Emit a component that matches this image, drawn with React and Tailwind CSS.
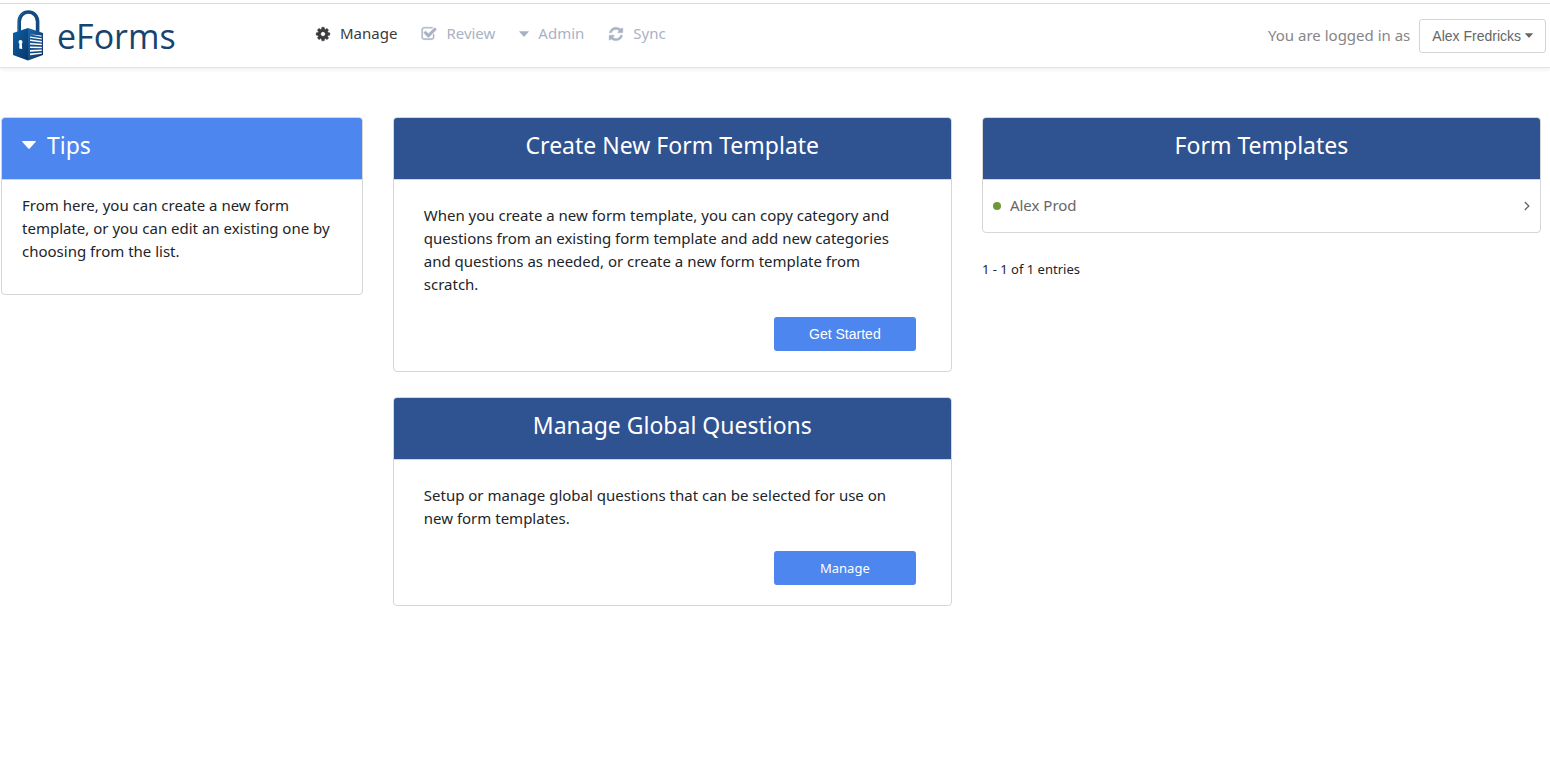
import { useState } from 'react';

const ICONS = {
  cog: 'M1152 896q0-106-75-181t-181-75-181 75-75 181 75 181 181 75 181-75 75-181zm512-109v222q0 12-8 23t-20 13l-185 28q-19 54-39 91 35 50 107 138 10 12 10 25t-9 23q-27 37-99 108t-94 71q-12 0-26-9l-138-108q-44 23-91 38-16 136-29 186-7 28-36 28h-222q-14 0-24.5-8.5t-11.5-21.5l-28-184q-49-16-90-37l-141 107q-10 9-25 9-14 0-25-11-126-114-165-168-7-10-7-23 0-12 8-23 15-21 51-66.5t54-70.5q-27-50-41-99l-183-27q-13-2-21-12.5t-8-23.5v-222q0-12 8-23t19-13l186-28q14-46 39-92-40-57-107-138-10-12-10-24 0-10 9-23 26-36 98.5-107.5t94.5-71.5q13 0 26 10l138 107q44-23 91-38 16-136 29-186 7-28 36-28h222q14 0 24.5 8.5t11.5 21.5l28 184q49 16 90 37l142-107q9-9 24-9 13 0 25 10 129 119 165 170 7 8 7 22 0 12-8 23-15 21-51 66.5t-54 70.5q26 50 41 98l183 28q13 2 21 12.5t8 23.5z',
  check: 'M1472 930v318q0 119-84.5 203.5t-203.5 84.5h-832q-119 0-203.5-84.5t-84.5-203.5v-832q0-119 84.5-203.5t203.5-84.5h832q63 0 117 25 15 7 18 23 3 17-9 29l-49 49q-10 10-23 10-3 0-9-2-23-6-45-6h-832q-66 0-113 47t-47 113v832q0 66 47 113t113 47h832q66 0 113-47t47-113v-254q0-13 9-22l64-64q10-10 23-10 6 0 12 3 20 8 20 29zm231-489l-814 814q-24 24-57 24t-57-24l-430-430q-24-24-24-57t24-57l110-110q24-24 57-24t57 24l263 263 647-647q24-24 57-24t57 24l110 110q24 24 24 57t-24 57z',
  sync: 'M1639 1056q0 5-1 7-64 268-268 434.5t-478 166.5q-146 0-282.5-55t-243.5-157l-129 129q-19 19-45 19t-45-19-19-45v-448q0-26 19-45t45-19h448q26 0 45 19t19 45-19 45l-137 137q71 66 161 102t187 36q134 0 250-65t186-179q11-17 53-117 8-23 30-23h192q13 0 22.5 9.5t9.5 22.5zm25-800v448q0 26-19 45t-45 19h-448q-26 0-45-19t-19-45 19-45l138-138q-148-137-349-137-134 0-250 65t-186 179q-11 17-53 117-8 23-30 23h-199q-13 0-22.5-9.5t-9.5-22.5v-7q65-268 270-434.5t480-166.5q146 0 284 55.5t245 156.5l130-129q19-19 45-19t45 19 19 45z',
};

const NAV = [
  { label: 'Manage', icon: 'cog', active: true },
  { label: 'Review', icon: 'check' },
  { label: 'Admin', icon: 'caret' },
  { label: 'Sync', icon: 'sync' },
];

function Caret({ className }) {
  return <svg viewBox="0 0 14 8" className={className} fill="currentColor" aria-hidden="true"><path d="M.7 0h12.6q.9.3.3 1L7.7 7.6q-.7.6-1.4 0L.4 1Q-.2.3.7 0z"/></svg>;
}

function NavIcon({ name }) {
  if (name === 'caret') return <Caret className="w-[10px] h-[6px]"/>;
  return <svg viewBox="0 0 1792 1792" className="size-4" fill="currentColor" stroke="currentColor" strokeWidth="40" aria-hidden="true"><path d={ICONS[name]}/></svg>;
}

function LockLogo() {
  return (
    <svg viewBox="0 0 32 52" className="w-8 h-[52px]" aria-hidden="true">
      <defs>
        <linearGradient id="face" x1="0" y1="0" x2="1" y2="1"><stop offset="0" stopColor="#0b63ac"/><stop offset="1" stopColor="#0a3566"/></linearGradient>
        <linearGradient id="side" x1="0" y1="0" x2="1" y2="1"><stop offset="0" stopColor="#1a68ab"/><stop offset="1" stopColor="#0d2f60"/></linearGradient>
      </defs>
      <path d="M7.2 24V11.5a9.2 9.5 0 0 1 18.4 0V24" fill="none" stroke="#134a80" strokeWidth="3.6"/>
      <path d="M6.6 22V11.5a9.8 10 0 0 1 5-8.6" fill="none" stroke="#2b6ca6" strokeWidth=".8"/>
      <path d="M1 23 16 18v32.4L1 45z" fill="url(#face)"/>
      <path d="M16 18l15 5v22L16 50.4z" fill="url(#side)"/>
      <g fill="#fff">
        <path d="M17.5 24.2l12 1.4v1.2z"/>
        <path d="M18 26.4l11.8 1.8v1.4L18 27.8zM18 29.6l11.8 1.4v1.4L18 31.1zM18 33l11.8.8v1.5L18 34.6zM18 36.5l11.8.2v1.5L18 38.1zM18 40.1l11.8-.5v1.5L18 41.7zM18 43.6l11.8-1.2v1.3L18 45.2z"/>
      </g>
      <circle cx="8.5" cy="32" r="2" fill="#fff"/>
      <path d="M7.5 32h2.2l.5 7-3-.6z" fill="#fff"/>
    </svg>
  );
}

function Card({ title, children }) {
  return (
    <section className="border border-[#d5d6d8] rounded overflow-hidden">
      <h2 className="h-[62px] pt-[11px] border-b border-[#d5d6d8] bg-[#2f5291] text-white text-[23px] leading-8 text-center font-normal">{title}</h2>
      {children}
    </section>
  );
}

function ActionBtn({ children, className }) {
  return <button type="button" className={`w-[142px] h-[34px] rounded-[3px] bg-[#4c86ee] text-white ${className}`}>{children}</button>;
}

export default function App() {
  const [tipsOpen, setTipsOpen] = useState(true);

  return (
    <div className="min-h-screen bg-white pt-[3px] font-['Noto_Sans','Open_Sans',sans-serif] text-[15px] leading-[23px] text-[#212529]">
      <header className="flex items-center h-[65px] border-t border-t-[#dcdcdc] border-b border-b-[#e3e3e3] shadow-[0_2px_4px_rgba(0,0,0,0.06)] pl-3 pr-1">
        <a href="#home" className="flex items-center gap-[13px] w-[303px] text-[#17446f]">
          <LockLogo/>
          <span className="text-[34px] leading-10 font-['Open_Sans',sans-serif]">eForms</span>
        </a>
        <nav className="flex items-center gap-6 pb-1">
          {NAV.map(n=>(
            <a key={n.label} href={'#'+n.label.toLowerCase()} className={`flex items-center gap-[9px] ${n.active?'text-[#3a3a3f]':'text-[#a9b2c4]'}`}>
              <NavIcon name={n.icon}/>{n.label}
            </a>
          ))}
        </nav>
        <div className="ml-auto flex items-center gap-[9px] text-[#868686]">
          <span>You are logged in as</span>
          <button type="button" className="flex items-center gap-1 h-[34px] px-3 border border-[#d4d4d4] rounded-[3px] text-sm text-[#666] font-['Liberation_Sans',sans-serif]">
            Alex Fredricks<Caret className="w-2 h-[5px]"/>
          </button>
        </div>
      </header>

      <main className="grid grid-cols-[11fr_17fr_17fr] items-start gap-[30px] pt-[49px] pl-px pr-[9px]">
        <section className="border border-[#d5d6d8] rounded overflow-hidden">
          <h2 className="h-[62px] border-b border-[#d5d6d8] bg-[#4c86ee]">
            <button type="button" onClick={()=>setTipsOpen(!tipsOpen)} aria-expanded={tipsOpen} className="flex items-center gap-[11px] w-full pt-[11px] pl-5 text-white text-[23px] leading-8">
              <Caret className="w-[14px] h-2"/>Tips
            </button>
          </h2>
          {tipsOpen && <p className="px-5 pt-[14px] pb-[31px]">From here, you can create a new form template, or you can edit an existing one by choosing from the list.</p>}
        </section>

        <div className="flex flex-col gap-[25px]">
          <Card title="Create New Form Template">
            <div className="flex flex-col gap-[21px] pl-[30px] pr-[35px] pt-6 pb-5">
              <p>When you create a new form template, you can copy category and questions from an existing form template and add new categories and questions as needed, or create a new form template from scratch.</p>
              <ActionBtn className="self-end text-sm font-['Liberation_Sans',sans-serif]">Get Started</ActionBtn>
            </div>
          </Card>
          <Card title="Manage Global Questions">
            <div className="flex flex-col gap-[21px] pl-[30px] pr-[35px] pt-6 pb-5">
              <p>Setup or manage global questions that can be selected for use on new form templates.</p>
              <ActionBtn className="self-end text-[13px]">Manage</ActionBtn>
            </div>
          </Card>
        </div>

        <div>
          <Card title="Form Templates">
            <ul>
              <li>
                <a href="#alex-prod" className="flex items-center h-[52px] px-[10px] text-[#666]">
                  <span className="size-2 rounded-full bg-[#6d9a37] mr-[9px]"></span>
                  <span className="pb-0.5">Alex Prod</span>
                  <svg viewBox="0 0 6 10" className="ml-auto w-[6px] h-[10px]" fill="none" stroke="currentColor" strokeWidth="1.3" aria-hidden="true"><path d="M.8 1l4 4-4 4"/></svg>
                </a>
              </li>
            </ul>
          </Card>
          <p className="mt-[26px] text-[13px] leading-5">1 - 1 of 1 entries</p>
        </div>
      </main>
    </div>
  );
}
